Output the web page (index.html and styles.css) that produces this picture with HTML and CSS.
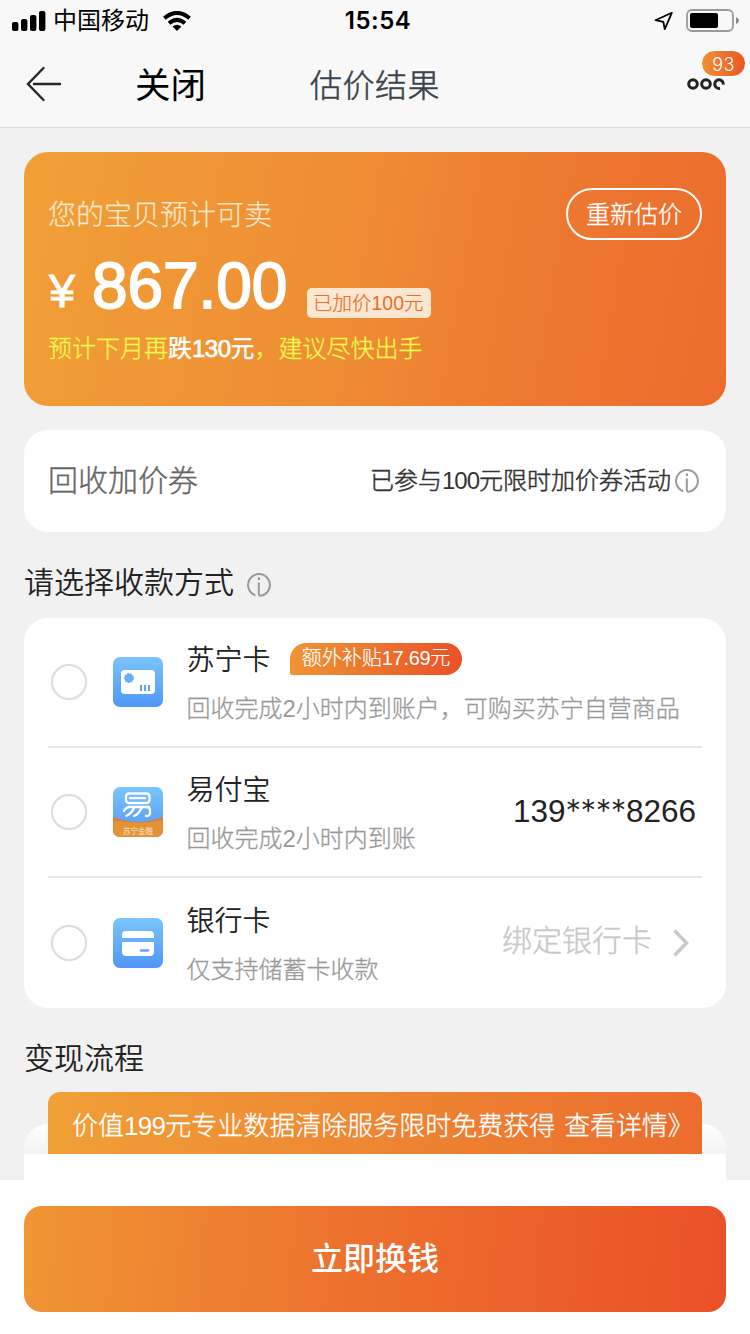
FILE: index.html
```html
<!DOCTYPE html>
<html lang="zh-CN">
<head>
<meta charset="utf-8">
<title>估价结果</title>
<link rel="stylesheet" href="styles.css">
</head>
<body>
<svg width="0" height="0" class="defs" aria-hidden="true">
  <defs>
    <linearGradient id="blue" x1="0" y1="0" x2="0" y2="1"><stop offset="0" stop-color="#7ac5fb"/><stop offset="1" stop-color="#5096f7"/></linearGradient>
    <clipPath id="tile"><rect width="50" height="50" rx="7"/></clipPath>
    <symbol id="info" viewBox="0 0 24 24"><path d="M8.300 22.200A10.900 10.900 0 1 1 15.700 22.200Q11.800 24 11.800 20V9.500" fill="none" stroke="#999" stroke-width="2"/><rect x="10.800" y="4.500" width="2.200" height="2.500" fill="#999"/></symbol>
  </defs>
</svg>
<header class="top">
  <div class="status">
    <div class="carrier">
      <svg width="34" height="20" viewBox="0 0 34 20"><rect x="0" y="11" width="6.400" height="9" rx="2"/><rect x="9" y="8" width="6.400" height="12" rx="2"/><rect x="18" y="4" width="6.400" height="16" rx="2"/><rect x="27" y="0" width="6.400" height="20" rx="2"/></svg>
      <span class="carrier-name">中国移动</span>
      <svg width="28" height="20" viewBox="0 0 28 20"><g fill="none" stroke="#000" stroke-width="4"><path d="M1.400 7.300Q14 -3.500 26.600 7.300"/><path d="M6 12.200Q14 5.500 22 12.200"/></g><path d="M9.600 15.600Q14 12 18.400 15.600L14 20Z"/></svg>
    </div>
    <div class="clock">15:54</div>
    <div class="battery">
      <svg width="20" height="20" viewBox="0 0 20 20"><path d="M17.800 1.800L1.500 9.200L9.300 10.800L10.800 18.200Z" fill="none" stroke="#000" stroke-width="1.800" stroke-linejoin="round"/></svg>
      <svg width="54" height="24" viewBox="0 0 54 24"><rect x="1" y="1" width="46" height="21" rx="5" fill="none" stroke="#999" stroke-width="1.800"/><rect x="4" y="4" width="28" height="15" rx="2"/><path d="M50 8Q53 9.500 53 11.500T50 15Z" fill="#888"/></svg>
    </div>
  </div>
  <nav class="nav">
    <svg class="back" width="38" height="38" viewBox="0 0 38 38"><path d="M18.500 3L3 19L18.500 35M9 19H35" fill="none" stroke="#262626" stroke-width="2.400" stroke-linecap="round"/></svg>
    <span class="close">关闭</span>
    <h1 class="title">估价结果</h1>
    <div class="more">
      <svg width="40" height="14" viewBox="0 0 40 14"><g fill="none" stroke="#222" stroke-width="3"><circle cx="6" cy="7" r="4.300"/><circle cx="19" cy="7" r="4.300"/><path d="M33 11.300A4.300 4.300 0 1 1 36.300 7.600"/></g></svg>
      <span class="badge">93</span>
    </div>
  </nav>
</header>
<main class="page">
  <section class="quote">
    <div class="quote-head"><span class="quote-label">您的宝贝预计可卖</span><span class="again">重新估价</span></div>
    <div class="price"><span class="yen">¥</span><span class="amount">867.00</span><span class="plus">已加价<i>100</i>元</span></div>
    <p class="trend">预计下月再<b>跌<i>130</i>元</b>，建议尽快出手</p>
  </section>
  <section class="coupon">
    <span class="coupon-name">回收加价券</span>
    <span class="coupon-info">已参与<i>100</i>元限时加价券活动</span>
    <svg class="info" width="24" height="24"><use href="#info"/></svg>
  </section>
  <h2 class="heading">请选择收款方式<svg class="info" width="24" height="24"><use href="#info"/></svg></h2>
  <section class="methods">
    <div class="method">
      <span class="radio"></span>
      <svg class="logo" width="50" height="50" viewBox="0 0 50 50"><rect width="50" height="50" rx="7" fill="url(#blue)"/><rect x="8" y="13" width="34" height="24" rx="4" fill="#fff"/><circle cx="16" cy="21" r="4.300" fill="#67aef9" stroke="#67aef9" stroke-width="1.400" stroke-dasharray="1.800 1.200"/><path d="M28 28v6M32 28v6M36 28v6" stroke="#5fa6f8" stroke-width="2"/></svg>
      <div class="method-text">
        <div class="method-name">苏宁卡<span class="bonus">额外补贴<i>17.69</i>元</span></div>
        <div class="method-note">回收完成<i>2</i>小时内到账户，可购买苏宁自营商品</div>
      </div>
    </div>
    <div class="method">
      <span class="radio"></span>
      <svg class="logo" width="50" height="50" viewBox="0 0 50 50"><g clip-path="url(#tile)"><rect width="50" height="50" fill="url(#blue)"/><path d="M0 30Q25 40 50 30V50H0Z" fill="#de7b2c"/><path d="M0 33Q25 38.500 50 33V50H0Z" fill="#e39235"/></g><g fill="none" stroke="#fff" stroke-width="2.300" stroke-linecap="round" stroke-linejoin="round"><rect x="13" y="6.500" width="23.500" height="9.500" rx="3"/><path d="M17 11.200H32M36 20H17Q13 20 11 24M17 20H33Q37 20 37 23V26Q37 29 33 29M21 21Q19 26 13.500 28.800M28.500 21Q26 27 21 29"/></g><text class="logo-text" x="25" y="46.500" text-anchor="middle">苏宁金融</text></svg>
      <div class="method-text">
        <div class="method-name">易付宝</div>
        <div class="method-note">回收完成<i>2</i>小时内到账</div>
      </div>
      <span class="phone">139<span class="mask">****</span>8266</span>
    </div>
    <div class="method">
      <span class="radio"></span>
      <svg class="logo" width="50" height="50" viewBox="0 0 50 50"><rect width="50" height="50" rx="7" fill="url(#blue)"/><path d="M9 20V17Q9 13 13 13H37Q41 13 41 17V20ZM9 24H41V34Q41 38 37 38H13Q9 38 9 34Z" fill="#fff"/><path d="M28 32.500H35" stroke="#5fa3f8" stroke-width="2.400" stroke-linecap="round"/></svg>
      <div class="method-text">
        <div class="method-name">银行卡</div>
        <div class="method-note">仅支持储蓄卡收款</div>
      </div>
      <span class="bind">绑定银行卡</span>
      <svg class="chevron" width="18" height="30" viewBox="0 0 18 30"><path d="M2.500 2.500L14.500 15L2.500 27.500" fill="none" stroke="#c8c8c8" stroke-width="3.400"/></svg>
    </div>
  </section>
  <h2 class="heading flow-heading">变现流程</h2>
  <section class="flow">
    <div class="banner"><span>价值<i>199</i>元专业数据清除服务限时免费获得</span><span class="banner-link">查看详情》</span></div>
    <div class="flow-shell"></div>
    <div class="flow-body"></div>
  </section>
</main>
<footer class="footer"><button class="submit">立即换钱</button></footer>
</body>
</html>
```
FILE: styles.css
```css
* { box-sizing: border-box; margin: 0; padding: 0; }
body {
  width: 750px;
  height: 1334px;
  overflow: hidden;
  display: flex;
  flex-direction: column;
  background: #f1f1f1;
  color: #222;
  font-family: Inter, "Noto Sans CJK SC", sans-serif;
  font-weight: 300;
  white-space: nowrap;
}
i { font-family: "Liberation Sans", Arial, sans-serif; font-style: normal; font-weight: 400; -webkit-text-stroke: 0; }
svg { display: block; flex: none; }
.defs { position: absolute; }

.top { height: 128px; background: #f8f8f8; border-bottom: 1px solid #dadada; }
.status { height: 40px; display: grid; grid-template-columns: 1fr auto 1fr; align-items: center; padding: 0 10px 0 12px; color: #000; }
.carrier { display: flex; align-items: center; }
.carrier-name { margin: 0 14px 0 7px; font-size: 24px; line-height: 42px; font-weight: 400; }
.clock { font-size: 24px; font-weight: 600; line-height: 42px; letter-spacing: 0.5px; padding-left: 4px; }
.battery { display: flex; justify-content: flex-end; align-items: center; gap: 12px; }
.nav { height: 87px; display: flex; align-items: center; padding-left: 25px; }
.close { margin-left: 72px; padding-top: 4px; font-size: 35.500px; line-height: 50px; font-weight: 400; color: #000; width: 175px; }
.title { padding-top: 4px; font-size: 32px; line-height: 50px; font-weight: 300; color: #39444a; width: 377px; letter-spacing: 0.5px; -webkit-text-stroke: 0.5px; }
.more { position: relative; }
.badge {
  position: absolute; left: 14px; top: -27px;
  width: 45px; height: 27px; border: 1px solid #fff; border-radius: 14px;
  background: linear-gradient(90deg, #ef9033, #ea5728);
  color: #fff; font-size: 18px; line-height: 27px; text-align: center; letter-spacing: 0.5px;
}

.page { height: 1052px; padding: 24px 24px 0; }
.quote { height: 254px; border-radius: 24px; padding: 36px 24px 0; background: linear-gradient(100deg, #f0a037, #ef8d34 45%, #ed7730 75%, #ec6c2d); color: #fff; }
.quote-head { display: flex; justify-content: space-between; height: 52px; }
.quote-label { font-size: 28px; line-height: 54px; color: #fbe6c9; -webkit-text-stroke: 0.25px; }
.again { width: 136px; height: 52px; border: 2px solid #fff; border-radius: 26px; font-size: 24px; line-height: 50px; text-align: center; -webkit-text-stroke: 0.3px; }
.price { display: flex; align-items: flex-end; height: 78px; font-family: "Liberation Sans", Arial, sans-serif; }
.yen { font-size: 47px; font-weight: 400; line-height: 54px; padding-left: 1px; width: 44px; -webkit-text-stroke: 0.900px; }
.amount { font-size: 64px; font-weight: 400; line-height: 64px; width: 215px; -webkit-text-stroke: 1.800px; letter-spacing: -0.1px; }
.plus { height: 30px; padding: 0 6px; border-radius: 5px; background: #fbe6cf; color: #ec6c2d; font: 300 19.500px/30px Inter, "Noto Sans CJK SC", sans-serif; width: 124px; -webkit-text-stroke: 0.2px; }
.trend { margin-top: 12px; font-size: 24px; line-height: 37px; color: #f2fa4c; -webkit-text-stroke: 0.3px; }
.trend b { font-weight: 500; color: #fff; -webkit-text-stroke: 0; }
.trend i { -webkit-text-stroke: 0.7px; letter-spacing: -0.5px; }

.coupon { height: 102px; margin-top: 24px; border-radius: 24px; background: #fff; display: flex; align-items: center; padding: 0 27px 0 24px; }
.coupon-name { font-size: 30px; line-height: 40px; color: #666; margin-right: auto; padding-bottom: 2px; -webkit-text-stroke: 0.4px; }
.coupon-info { font-size: 24px; line-height: 40px; color: #333; margin-right: 4px; font-weight: 300; -webkit-text-stroke: 0.5px; }
.coupon-info i { letter-spacing: -1px; }

.heading { display: flex; align-items: center; height: 86px; padding-top: 27px; padding-bottom: 13px; font-size: 30px; line-height: 40px; font-weight: 350; }
.heading .info { margin: 6px 0 0 13px; }

.methods { height: 390px; border-radius: 24px; background: #fff; padding: 0 24px; }
.method { height: 130px; display: flex; align-items: center; border-bottom: 2px solid #e5e5e5; padding-left: 3px; }
.method:last-child { border-bottom: 0; }
.radio { width: 36px; height: 36px; flex: none; border: 2px solid #ddd; border-radius: 50%; box-shadow: 0 0 1px #ddd; margin-right: 26px; }
.logo-text { font-size: 7.500px; fill: #fbe6cf; font-weight: 400; }
.method-text { margin: 3px auto 0 23.500px; }
.method-name { display: flex; align-items: center; font-size: 28px; line-height: 40px; font-weight: 350; height: 40px; }
.bonus { margin: -2px 0 0 19.500px; width: 172px; height: 32px; border-radius: 16px 16px 16px 2px; background: linear-gradient(100deg, #ef9634, #ea5027); color: #fff; font-size: 20px; line-height: 31px; text-align: center; font-weight: 300; -webkit-text-stroke: 0.2px; }
.bonus i { letter-spacing: -0.3px; }
.method-note { margin-top: 11px; font-size: 24px; line-height: 36px; color: #999; -webkit-text-stroke: 0.3px; }
.phone { font-family: "Liberation Sans", Arial, sans-serif; font-size: 31.500px; line-height: 40px; margin: 0 6px 3px 0; font-weight: 400; }
.mask { font-family: Inter, sans-serif; font-size: 31px; font-weight: 350; letter-spacing: -0.4px; }
.bind { font-size: 30px; line-height: 40px; color: #c8c8c8; margin: 0 20px 6px 0; -webkit-text-stroke: 0.4px; }
.chevron { margin-right: 12px; }

.flow-heading { height: 84px; padding: 30px 0 0; align-items: flex-start; }
.flow { display: grid; grid-template-rows: 32px 30px 26px; }
.banner { grid-area: 1 / 1 / 3 / 2; margin: 0 24px; z-index: 1; border-radius: 12px 12px 0 0; background: linear-gradient(93deg, #f0a037, #ec6c2d); color: #fff; font-size: 26px; line-height: 68px; padding-left: 24px; display: flex; gap: 9px; -webkit-text-stroke: 0.3px; }
.banner i { letter-spacing: -0.7px; }
.banner-link { letter-spacing: -0.2px; }
.flow-shell { grid-area: 2 / 1; border-radius: 24px 24px 0 0; background: linear-gradient(#fff, #f3f3f3); }
.flow-body { grid-area: 3 / 1; background: #fff; }

.footer { height: 154px; background: #fff; padding: 26px 24px 22px; }
.submit { display: block; width: 702px; height: 106px; border: 0; border-radius: 18px; background: linear-gradient(95deg, #ef9634, #ed702d 48%, #ea5027); color: #fff; font: 500 32px/106px Inter, "Noto Sans CJK SC", sans-serif; }
```
